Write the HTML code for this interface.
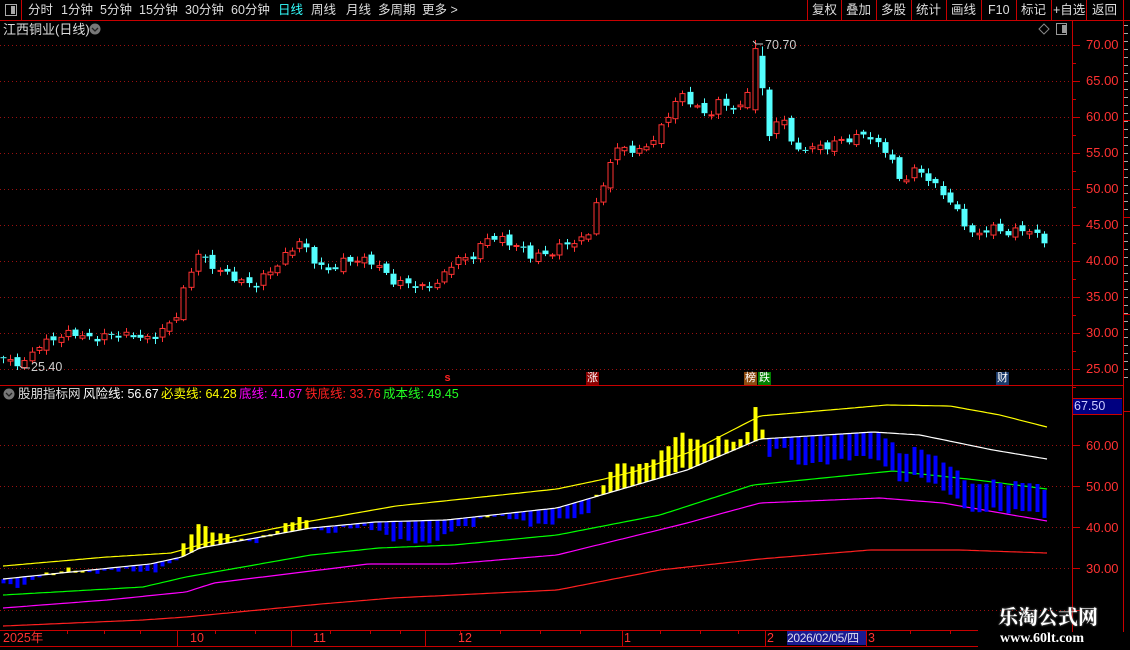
<!DOCTYPE html>
<html><head><meta charset="utf-8">
<style>
html,body{margin:0;padding:0;background:#000;width:1130px;height:650px;overflow:hidden;font-family:"Liberation Sans","Noto Sans CJK SC",sans-serif;}
.t{position:absolute;white-space:nowrap;font-size:12.5px;line-height:14px;}
.m{color:#ddd;top:3px;}
.ax{position:absolute;color:#ff3232;font-size:13px;left:1086px;line-height:14px;}
.tl{position:absolute;color:#ff3232;font-size:12.5px;top:631px;line-height:14px;white-space:nowrap;}
.mk{position:absolute;top:372px;width:13px;height:13px;font-size:11px;line-height:13px;text-align:center;color:#fff;}
</style></head><body>
<svg id="s" width="1130" height="650" style="position:absolute;left:0;top:0" xmlns="http://www.w3.org/2000/svg"></svg>

<div class="t m" style="left:28px">分时</div>
<div class="t m" style="left:61px">1分钟</div>
<div class="t m" style="left:100px">5分钟</div>
<div class="t m" style="left:139px">15分钟</div>
<div class="t m" style="left:185px">30分钟</div>
<div class="t m" style="left:231px">60分钟</div>
<div class="t m" style="left:278px;color:#3ff">日线</div>
<div class="t m" style="left:311px">周线</div>
<div class="t m" style="left:346px">月线</div>
<div class="t m" style="left:378px">多周期</div>
<div class="t m" style="left:422px">更多 &gt;</div>
<div class="t m" style="left:812px">复权</div>
<div class="t m" style="left:846px">叠加</div>
<div class="t m" style="left:881px">多股</div>
<div class="t m" style="left:916px">统计</div>
<div class="t m" style="left:951px">画线</div>
<div class="t m" style="left:988px">F10</div>
<div class="t m" style="left:1021px">标记</div>
<div class="t m" style="left:1053px">+自选</div>
<div class="t m" style="left:1092px">返回</div>

<div class="t" style="left:3px;top:23px;color:#ddd;font-size:13px">江西铜业(日线)</div>
<div class="t" style="left:765px;top:38px;color:#ccc;font-size:12.5px">70.70</div>
<div class="t" style="left:31px;top:360px;color:#ccc;font-size:12.5px">25.40</div>

<div class="mk" style="left:441px;background:none;color:#f22;font-weight:bold">s</div>
<div class="mk" style="left:586px;background:#8b0000">涨</div>
<div class="mk" style="left:744px;background:#8b4a10">榜</div>
<div class="mk" style="left:758px;background:#008000">跌</div>
<div class="mk" style="left:996px;background:#1a3a6a">财</div>

<div class="t" style="left:18px;top:387px;color:#ddd">股朋指标网</div>
<div class="t" style="left:83px;top:387px;color:#fff">风险线: 56.67</div>
<div class="t" style="left:161px;top:387px;color:#ff0">必卖线: 64.28</div>
<div class="t" style="left:239px;top:387px;color:#f0f">底线: 41.67</div>
<div class="t" style="left:305px;top:387px;color:#f22">铁底线: 33.76</div>
<div class="t" style="left:383px;top:387px;color:#2f2">成本线: 49.45</div>

<div class="ax" style="top:38px">70.00</div>
<div class="ax" style="top:74px">65.00</div>
<div class="ax" style="top:110px">60.00</div>
<div class="ax" style="top:146px">55.00</div>
<div class="ax" style="top:182px">50.00</div>
<div class="ax" style="top:218px">45.00</div>
<div class="ax" style="top:254px">40.00</div>
<div class="ax" style="top:290px">35.00</div>
<div class="ax" style="top:326px">30.00</div>
<div class="ax" style="top:362px">25.00</div>
<div style="position:absolute;left:1073px;top:398px;width:48px;height:15px;background:#000080;border-top:1px solid #c00;border-bottom:1px solid #c00;color:#ccf;font-size:12.5px;line-height:15px;padding-left:1px">67.50</div>
<div class="ax" style="top:439px">60.00</div>
<div class="ax" style="top:480px">50.00</div>
<div class="ax" style="top:521px">40.00</div>
<div class="ax" style="top:562px">30.00</div>

<div class="tl" style="left:3px">2025年</div>
<div class="tl" style="left:190px">10</div>
<div class="tl" style="left:313px">11</div>
<div class="tl" style="left:458px">12</div>
<div class="tl" style="left:624px">1</div>
<div class="tl" style="left:767px">2</div>
<div style="position:absolute;left:787px;top:631px;width:79px;height:14px;background:#1a1a90;color:#dde;font-size:12px;line-height:14px;white-space:nowrap;overflow:hidden;letter-spacing:-0.3px">2026/02/05/四</div>
<div class="tl" style="left:868px">3</div>

<div class="t" style="left:998px;top:606px;color:#fff;font-family:'Liberation Serif','Noto Serif CJK SC',serif;font-weight:bold;font-size:20px;line-height:24px;text-shadow:0 0 2px #888">乐淘公式网</div>
<div class="t" style="left:1000px;top:631px;color:#fff;font-family:'Liberation Serif',serif;font-weight:bold;font-size:14px;line-height:16px">www.60lt.com</div>

<script>
var S=document.getElementById('s'),h='';
function L(x1,y1,x2,y2,c,w,d){h+='<line x1="'+x1+'" y1="'+y1+'" x2="'+x2+'" y2="'+y2+'" stroke="'+c+'" stroke-width="'+(w||1)+'"'+(d?' stroke-dasharray="'+d+'"':'')+'/>';}
function R(x,y,w,hh,f,s){h+='<rect x="'+x+'" y="'+y+'" width="'+w+'" height="'+hh+'" fill="'+f+'"'+(s?' stroke="'+s+'"':'')+'/>';}
var RED='#c80000';
L(0,20.5,1130,20.5,RED);
L(21.5,0,21.5,20,RED);
R(5.5,4.5,11,11,'none','#aaa');R(11,6,4,8,'#aaa');
[807,841,876,911,946,981,1016,1051,1086,1123].forEach(function(x){L(x+.5,0,x+.5,20,RED);});
h+='<circle cx="95" cy="29" r="5.5" fill="#777"/><polyline points="92,28 95,31 98,28" fill="none" stroke="#222" stroke-width="1.3"/>';
h+='<circle cx="9" cy="394" r="5.5" fill="#777"/><polyline points="6,393 9,396 12,393" fill="none" stroke="#222" stroke-width="1.3"/>';
h+='<polygon points="1044,24 1049,29 1044,34 1039,29" fill="none" stroke="#888"/>';
R(1056.5,23.5,10,11,'none','#999');R(1062,25,4,8,'#999');
L(1072.5,21,1072.5,632,RED);L(1123.5,21,1123.5,632,RED);
L(0,385.5,1123,385.5,RED);
L(0,630.5,978,630.5,RED);L(0,646.5,978,646.5,RED);
[177,291,425,622,765,866].forEach(function(x){L(x+.5,630,x+.5,646,RED);});
[67,104,140,215,255,330,370,400,460,500,540,580,660,700,738,800,830,910,950].forEach(function(x){L(x+.5,630,x+.5,634,RED);});
for(var p=70;p>=25;p-=5){var y=Math.round(45+(70-p)*7.2)+.5;L(0,y,1070,y,'#9a1010',1,'1,3');L(1072,y,1080,y,RED);L(1072,y+18,1076,y+18,RED);}
[445,486,527,568,610].forEach(function(y){L(0,y+.5,1070,y+.5,'#9a1010',1,'1,3');L(1072,y+.5,1080,y+.5,RED);});
for(var y=25;y<380;y+=8){L(1124,y+.5,1128,y+.5,'#aaa');}
[0,1,2,3].forEach(function(i){L(1124,120+i*97+.5,1130,120+i*97+.5,RED)});
var K=[[3,26.5],[10,26.2],[25,25.8],[40,28.5],[55,29.5],[75,29.8],[100,29.3],[130,30],[150,28.7],[160,30.5],[175,32],[183,35.5],[190,38],[197,41.5],[210,39.5],[225,38],[240,37.5],[255,36.5],[270,38.5],[285,41],[300,42.5],[315,40],[330,38.5],[345,40],[360,40.5],[375,39.5],[390,37.5],[405,37],[420,36],[440,37.5],[455,40],[470,40.5],[485,43],[500,43],[515,42.5],[530,40.5],[545,41],[560,42],[575,42.5],[587,43.5],[595,48],[603,50],[612,55],[625,56],[640,55],[655,57],[665,60],[680,63],[690,62],[700,61],[710,60.5],[720,62],[735,61],[745,62],[754,69.5],[761,64],[770,57],[775,59],[785,60],[795,54.5],[810,56],[830,56],[850,57],[865,58],[875,56],[890,55],[900,51],[915,52.5],[930,51.5],[945,49],[960,46],[975,43.5],[990,44.5],[1005,44],[1020,44.5],[1035,43.5],[1045,43]];
function I(A,x){if(x<=A[0][0])return A[0][1];for(var i=1;i<A.length;i++){if(x<=A[i][0]){var a=A[i-1],b=A[i];return a[1]+(b[1]-a[1])*(x-a[0])/(b[0]-a[0]);}}return A[A.length-1][1];}
function py(p){return 45+(70-p)*7.2;}
function by(p){return 446+(60-p)*4.1;}
var W=[[3,579],[71,572],[150,564],[182,557],[200,548],[311,528],[375,522],[446,520],[557,508],[687,470],[760,439],[873,432],[920,435],[993,450],[1047,459]];
var Y=[[3,566],[107,557],[171,553],[214,541],[311,521],[396,506],[482,497],[557,489],[600,480],[640,470],[690,452],[760,416],[887,405],[950,406],[1000,415],[1047,427]];
var G=[[3,595],[143,587],[186,577],[311,555],[379,548],[454,545],[557,535],[660,515],[753,485],[893,471],[977,480],[1047,489]];
var M=[[3,608],[107,600],[186,592],[214,583],[368,564],[450,564],[557,555],[687,523],[760,503],[880,498],[943,503],[1047,521]];
var RR=[[3,626],[143,620],[186,617],[321,604],[393,598],[557,590],[660,570],[760,559],[870,550],[960,550],[1047,553]];
var n=145,prev=26.3,bars='',cand='';
for(var i=0;i<n;i++){
 var x=2.7+7.23*i;
 var c=I(K,x)+0.45*Math.sin(i*2.3)+0.25*Math.sin(i*5.1);
 var o=prev+0.4*Math.sin(i*3.7+1);
 var hi=Math.max(o,c)+0.2+0.5*Math.abs(Math.sin(i*1.9));
 var lo=Math.min(o,c)-0.2-0.5*Math.abs(Math.cos(i*2.7));
 if(i==104){o=61;c=69.5;hi=70.7;lo=60.5;}
 if(i==105){o=68.5;c=64;hi=69.8;lo=63;}
 var up=c>=o,col=up?'#ff3232':'#54ffff';
 var xc=Math.round(x)+.5;
 var yt=py(Math.max(o,c)),yb=py(Math.min(o,c));
 if(yb-yt<1)yb=yt+1;
 cand+='<line x1="'+xc+'" y1="'+py(hi)+'" x2="'+xc+'" y2="'+yt+'" stroke="'+col+'"/>';
 cand+='<line x1="'+xc+'" y1="'+yb+'" x2="'+xc+'" y2="'+py(lo)+'" stroke="'+col+'"/>';
 if(up)cand+='<rect x="'+(xc-2.5)+'" y="'+yt+'" width="5" height="'+(yb-yt)+'" fill="#000" stroke="'+col+'"/>';
 else cand+='<rect x="'+(xc-3)+'" y="'+yt+'" width="6" height="'+(yb-yt)+'" fill="'+col+'"/>';
 var cy=by(c),wy=I(W,x);
 var bc=cy<wy?'#ffff00':'#0000ff';
 var d=cy-wy;if(d>28)d=28;if(d<-35)d=-35;
 var an=cy-d;
 var t=Math.min(an,cy),bh=Math.max(2,Math.abs(d));
 bars+='<rect x="'+(Math.round(x)-1.5)+'" y="'+t+'" width="4" height="'+bh+'" fill="'+bc+'"/>';
 prev=c;
}
h+=cand;
function PL(A,c){var s='';for(var x=3;x<=1047;x+=4)s+=x+','+I(A,x).toFixed(1)+' ';h+='<polyline points="'+s+'" fill="none" stroke="'+c+'" stroke-width="1.2"/>';}
PL(RR,'#ff2020');PL(M,'#ff00ff');PL(G,'#00ff00');
h+=bars;
PL(W,'#ffffff');PL(Y,'#ffff00');
h+='<polyline points="753,41 756,44 763,44" fill="none" stroke="#ccc"/>';
h+='<polyline points="20,366 22,368 30,368" fill="none" stroke="#ccc"/>';
S.innerHTML=h;
</script>
</body></html>
